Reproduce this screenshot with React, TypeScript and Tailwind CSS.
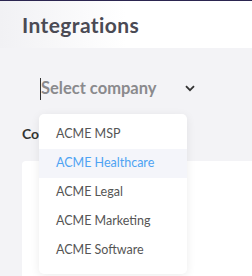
import React from "react";

const companies = ["ACME MSP", "ACME Healthcare", "ACME Legal", "ACME Marketing", "ACME Software"];

export default function App() {
  const active = "ACME Healthcare";

  return (
    <div
      className="relative w-[252px] h-[276px] overflow-hidden bg-[#f3f3f6] border-t border-[#2b2550]"
      style={{ fontFamily: "Lato, 'Noto Sans', sans-serif" }}
    >
      <header className="h-[47px] bg-white bg-gradient-to-r from-[#f1f1f4] via-white to-white flex items-center pl-[22px]">
        <h1 className="text-[21px] font-bold text-[#4a4a54] tracking-[0.4px]">Integrations</h1>
      </header>

      <main className="pl-[22px] pt-[29px]">
        <div className="flex items-center h-[23px] pl-[18px] pr-[57px]">
          <div className="w-px h-[22px] bg-[#333]" />
          <span className="text-[16.5px] font-bold text-[#8a8a8d] flex-1">Select company</span>
          <svg width="10" height="7" viewBox="0 0 10 7" className="text-[#333]">
            <path d="M1 1.2 L5 5.2 L9 1.2" fill="none" stroke="currentColor" strokeWidth="1.8" />
          </svg>
        </div>

        <p className="mt-[23px] text-[14px] font-bold text-[#333]">Company settings</p>
        <div className="mt-[17px] h-[140px] bg-white rounded-l-[4px]" />
      </main>

      <ul className="absolute left-[39px] top-[113px] w-[148px] pt-[6px] pb-[9px] bg-white rounded-[5px] shadow-[0_2px_10px_rgba(0,0,0,0.08)]">
        {companies.map((c) => (
          <li
            key={c}
            className={
              c === active
                ? "h-[29px] flex items-center pl-[17px] text-[12.5px] bg-[#f4f5fa] text-[#4ea3f3]"
                : "h-[29px] flex items-center pl-[17px] text-[12.5px] text-[#555]"
            }
          >
            {c}
          </li>
        ))}
      </ul>
    </div>
  );
}
